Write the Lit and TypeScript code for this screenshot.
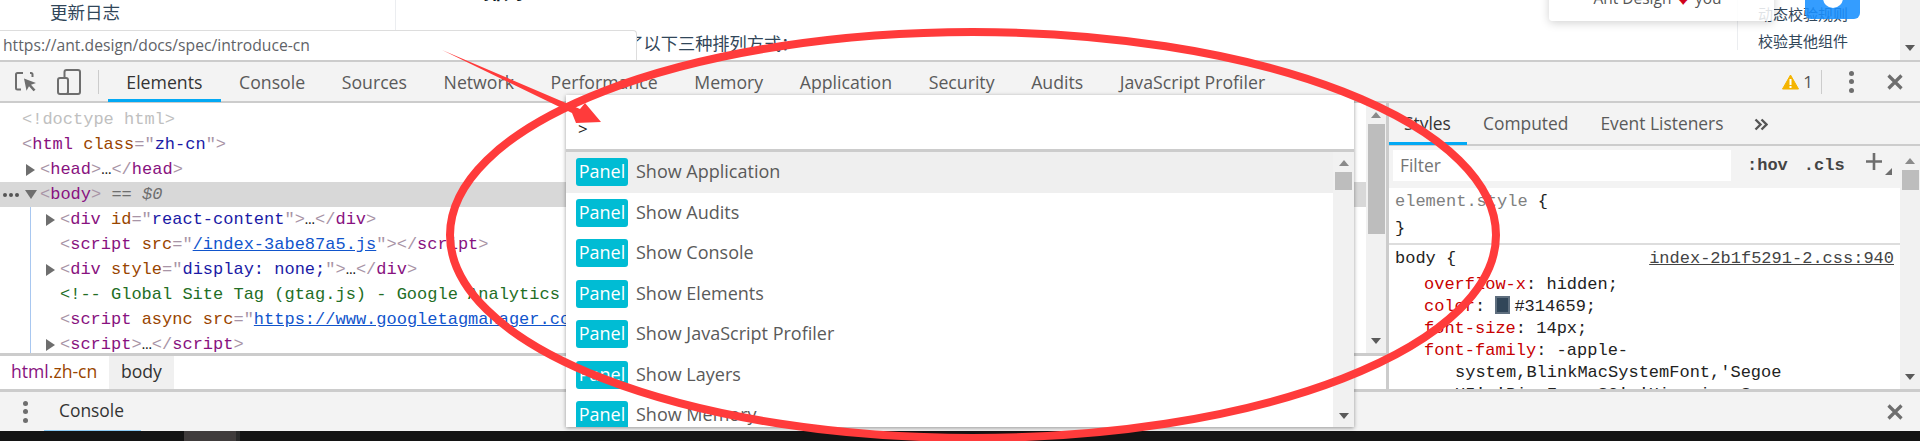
import { LitElement, html, css } from "lit";
import { customElement } from "lit/decorators.js";

const TABS = ["Elements","Console","Sources","Network","Performance","Memory","Application","Security","Audits","JavaScript Profiler"];
const ITEMS = ["Show Application","Show Audits","Show Console","Show Elements","Show JavaScript Profiler","Show Layers","Show Memory"];

@customElement("app-root")
export class AppRoot extends LitElement {
  static styles = css`
    :host { display: block; position: relative; width: 1920px; height: 441px; overflow: hidden; background: #fff;
      font-family: "Open Sans", "Noto Sans CJK SC", sans-serif; color: #333; }
    * { box-sizing: border-box; }
    .cjk { font-family: "Noto Sans CJK SC", sans-serif; color: #314659; }

    /* page behind devtools */
    .page { height: 60px; display: flex; overflow: hidden; }
    .side { width: 396px; border-right: 1px solid #ebedf0; padding: 0 0 0 50px; font-size: 17.5px; line-height: 24px; }
    .content { flex: 1; position: relative; min-width: 0; overflow: hidden; }
    .head { margin: -24px 0 0 87px; font-size: 20px; line-height: 30px; font-weight: 700; color: #0d1a26; height: 24px; }
    .para { margin: 30px 0 0 196px; font-size: 17.2px; line-height: 26px; white-space: nowrap; }
    .rnav { width: 163px; height: 50px; border-left: 1px solid #ebedf0; padding-left: 20px; font-size: 15px; line-height: 27px; white-space: nowrap; }
    .pscroll { width: 20px; background: #f1f1f1; display: flex; flex-direction: column; justify-content: flex-end; align-items: center; padding-bottom: 9px; }

    .fab { position: absolute; left: 1805px; top: -20px; width: 55px; height: 39px; background: rgba(24,144,255,.88); border-radius: 6px; }
    .fab i { position: absolute; left: 18px; top: 8px; width: 20px; height: 20px; border-radius: 50%; background: #fff; }
    .pop { position: absolute; left: 1549px; top: -20px; width: 225px; height: 41px; background: rgba(255,255,255,.85); border-radius: 4px;
      box-shadow: 0 2px 10px rgba(0,0,0,.18); text-align: center; font-size: 15.5px; color: #555; line-height: 22px; padding: 7px 8px 0 0; white-space: nowrap; }
    .pop b { color: #d0021b; font-weight: 400; }
    .url { position: absolute; left: 0; top: 30px; width: 637px; height: 30px; background: #fff; border: 1px solid #ddd; border-left: 0; border-bottom: 0;
      border-top-right-radius: 4px; font-size: 15.7px; line-height: 28px; padding-left: 3px; color: #5f6368; font-family: "Open Sans", sans-serif; }

    /* toolbar */
    .toolbar { height: 43px; background: #f3f3f3; border-top: 2px solid #ccc; border-bottom: 2px solid #ccc; display: flex; align-items: stretch; }
    .tools { width: 108px; display: flex; align-items: center; padding-left: 15px; }
    .tools svg { display: block; }
    .tools .dev { margin-left: 20px; }
    .vsep { width: 1px; height: 24px; background: #ccc; }
    .tools .vsep { margin-left: 17px; }
    .tabs { display: flex; flex: 1; }
    .tab { padding: 0 18.3px; font-size: 17.7px; line-height: 40px; color: #5a5a5a; white-space: nowrap; position: relative; }
    .tab.on { color: #333; }
    .tab.on::after { content: ""; position: absolute; left: 0; right: 0; bottom: -1px; height: 3px; background: #03a9f4; }
    .warn { display: flex; align-items: center; font-size: 17px; color: #555; }
    .warn .vsep { margin: 0 0 0 8px; }
    .warn .one { margin-left: 4px; }
    .dots { display: flex; flex-direction: column; gap: 3.5px; }
    .dots i { width: 5px; height: 5px; border-radius: 50%; background: #6e6e6e; display: block; }
    .warn .dots { margin-left: 27px; }
    .warn .x { margin: 0 17px 0 33px; }

    /* main */
    .main { height: 286px; display: flex; }
    .left { width: 1386px; display: flex; flex-direction: column; }
    .treewrap { height: 250px; display: flex; }
    .tree { width: 1366px; overflow: hidden; padding-top: 4px; position: relative; }
    .guide { position: absolute; left: 30px; top: 104px; bottom: 0; width: 1px; background: #a8c7f0; }
    .code { font-family: "Liberation Mono", monospace; font-size: 17px; white-space: nowrap; }
    .row { height: 25px; line-height: 25px; display: flex; align-items: center; }
    .row.sel { background: #d8d8d8; }
    .row.r0 { padding-left: 22px; }
    .row.r1 { padding-left: 26px; }
    .row.r2 { padding-left: 60px; }
    .row.r3 { padding-left: 46px; }
    .row.rb { padding-left: 3px; }
    .more { display: flex; gap: 2px; width: 22px; }
    .more i { width: 4px; height: 4px; border-radius: 50%; background: #555; display: block; }
    .tri { width: 0; height: 0; border-left: 9px solid #6e6e6e; border-top: 6px solid transparent; border-bottom: 6px solid transparent; margin-right: 5px; }
    .tdn { width: 0; height: 0; border-top: 9px solid #6e6e6e; border-left: 6px solid transparent; border-right: 6px solid transparent; margin-right: 3px; }
    .b { color: #a894a6; } .t { color: #881280; } .a { color: #994500; } .v { color: #1a1aa6; } .c { color: #236e25; }
    .l { color: #1155cc; text-decoration: underline; } .d { color: #c0c0c0; } .k { color: #222; } .g { color: #6e6e6e; }
    .vscroll { width: 20px; background: #f1f1f1; display: flex; flex-direction: column; align-items: center; position: relative; flex: none; }
    .up { width: 0; height: 0; border-bottom: 6px solid #8a8a8a; border-left: 5px solid transparent; border-right: 5px solid transparent; }
    .dn { width: 0; height: 0; border-top: 6px solid #5a5a5a; border-left: 5px solid transparent; border-right: 5px solid transparent; }
    .vscroll .up { margin-top: 9px; }
    .vscroll .th { width: 17px; background: #bdbdbd; margin-top: 6px; }
    .vscroll .dn { margin-top: auto; margin-bottom: 9px; }
    .tree-scroll .th { height: 110px; }
    .crumbs { height: 36px; border-top: 3px solid #ccc; display: flex; font-size: 17.6px; line-height: 31px; }
    .crumbs span { padding: 0 12px; white-space: nowrap; }
    .crumbs .first { width: 109px; color: #881280; padding: 0 0 0 11px; }
    .crumbs .first em { font-style: normal; color: #994500; }
    .crumbs .cur { background: #f0f0f0; color: #333; }

    .sidebar { flex: 1; border-left: 3px solid #ccc; display: flex; flex-direction: column; min-width: 0; }
    .stabs { height: 43px; background: #f3f3f3; border-bottom: 2px solid #ccc; display: flex; flex: none; }
    .stab { padding: 0 16px; font-size: 17.4px; line-height: 41px; color: #5a5a5a; position: relative; white-space: nowrap; }
    .stab:first-child { padding: 0 16px 0 15px; color: #333; width: 78px; }
    .stab:first-child::after { content: ""; position: absolute; left: 0; right: 0; bottom: -1px; height: 3px; background: #03a9f4; }
    .chev { margin: 15px 0 0 15px; display: block; }
    .sbody { flex: 1; display: flex; min-height: 0; }
    .scol { width: 511px; flex: none; display: flex; flex-direction: column; min-width: 0; overflow: hidden; }
    .filter { height: 42px; background: #f3f3f3; display: flex; align-items: center; padding: 0 0 3px 4px; flex: none; }
    .finput { width: 338px; height: 31px; background: #fff; padding-left: 7px; font-size: 17.4px; line-height: 30px; color: #757575; }
    .hov { font-family: "Liberation Mono", monospace; font-weight: 700; font-size: 17px; color: #444; margin-left: 16px; }
    .hov + .hov { margin-left: 16px; }
    .plus { margin-left: 20px; position: relative; width: 30px; height: 30px; }
    .plus svg { display: block; }
    .pane { padding: 2px 0 0 6px; line-height: 22px; }
    .pane.one { height: 57px; border-bottom: 2px solid #ddd; flex: none; padding-top: 3px; }
    .pane.one .close { margin-top: 5px; }
    .pane.one .g { color: #808080; }
    .rule { display: flex; justify-content: space-between; padding-right: 6px; margin: 1px 0 4px; }
    .rule u { color: #444; }
    .decl { padding-left: 29px; color: #222; }
    .decl .p { color: #c80000; }
    .decl2 { padding-left: 60px; color: #222; }
    .swatch { display: inline-block; width: 15px; height: 18px; background: #314659; border: 2px solid #5f6f7f; vertical-align: -3px; margin: 0 4px 0 0; }
    .side-scroll .th { height: 20px; }
    .side-scroll .up { margin-top: 12px; }

    .dborder { height: 3px; background: #ccc; }
    .drawer { height: 39px; background: #f3f3f3; display: flex; align-items: center; }
    .drawer .dots { margin-left: 23px; }
    .dtab { margin-left: 16px; width: 97px; height: 39px; padding-left: 15px; font-size: 17.4px; line-height: 37px; color: #333; border-bottom: 1px solid #8ccbf5; }
    .drawer .x { margin-left: auto; margin-right: 17px; }
    .dark { height: 10px; background: #141414; display: flex; position: relative; overflow: hidden; }
    .dark .win { margin-left: 184px; width: 56px; background: #403c3c; border-right: 4px solid #2a2a2a; }
    .dark .clock { margin-left: auto; margin-right: 94px; color: #fff; font-size: 14px; line-height: 20px; padding-top: 8px; height: 28px; }

    /* command palette */
    .palette { position: absolute; left: 566px; top: 95px; width: 788px; height: 332px; background: #fff; box-shadow: 0 1px 4px rgba(0,0,0,.4); display: flex; flex-direction: column; overflow: hidden; }
    .pinput { height: 54px; padding: 23px 0 0 12px; font-size: 17px; line-height: 22px; color: #222; flex: none; }
    .pline { height: 3px; background: #ccc; flex: none; }
    .plist { flex: 1; display: flex; min-height: 0; }
    .items { flex: 1; min-width: 0; overflow: hidden; }
    .item { height: 40.5px; display: flex; align-items: center; padding-left: 10px; font-size: 18px; color: #5a5a5a; }
    .item span:last-child { margin-top: -2px; }
    .tag { width: 52px; height: 28px; flex: none; border-radius: 3px; background: #00bcd4; color: #fff; text-align: center; line-height: 27px; margin-right: 8px; }
    .pal-scroll { width: 21px; }
    .pal-scroll .up { margin-top: 8px; }
    .pal-scroll .th { height: 18px; }
    .pal-scroll .dn { margin-bottom: 8px; }
    .item.on { background: #efefef; }

    .ink { position: absolute; left: 0; top: 0; width: 1920px; height: 441px; pointer-events: none; }
  `;

  private x() {
    return html`<svg class="x" width="16" height="16" viewBox="0 0 16 16"><path d="M1.5 1.5 14.5 14.5M14.5 1.5 1.5 14.5" stroke="#6e6e6e" stroke-width="3.2" fill="none"/></svg>`;
  }
  private dots() {
    return html`<div class="dots"><i></i><i></i><i></i></div>`;
  }

  render() {
    return html`
      <div class="page">
        <div class="side cjk">更新日志</div>
        <div class="content cjk">
          <div class="head">排列</div>
          <div class="para">提供了以下三种排列方式：</div>
        </div>
        <div class="rnav cjk"><div>动态校验规则</div><div>校验其他组件</div></div>
        <div class="pscroll"><div class="dn"></div></div>
      </div>
      <div class="fab"><i></i></div>
      <div class="pop">Ant Design <b>♥</b> you</div>
      <div class="url">https://ant.design/docs/spec/introduce-cn</div>

      <div class="toolbar">
        <div class="tools">
          <svg width="22" height="20" viewBox="0 0 22 20" fill="none"><path d="M8 1H2.500A1.500 1.500 0 0 0 1 2.500V16a1.500 1.500 0 0 0 1.500 1.500H6M15 1h1a1.500 1.500 0 0 1 1.500 1.500V5" stroke="#6e6e6e" stroke-width="2"/><path d="M9 6.500 21 11l-5 1.800 4.500 5-2 1.500-4.500-5-2.500 4.500z" fill="#6e6e6e"/></svg>
          <svg class="dev" width="24" height="26" viewBox="0 0 24 26" fill="none"><rect x="7.500" y="1" width="15.500" height="24" rx="2" stroke="#6e6e6e" stroke-width="2"/><rect x="1" y="9" width="10" height="16" rx="2" fill="#f3f3f3" stroke="#6e6e6e" stroke-width="2"/></svg>
          <div class="vsep"></div>
        </div>
        <div class="tabs">
          ${TABS.map((t, i) => html`<div class="tab ${i === 0 ? "on" : ""}">${t}</div>`)}
        </div>
        <div class="warn">
          <svg width="17" height="16" viewBox="0 0 17 16"><path d="M8.500 1 16.500 15H.5z" fill="#f4b400" stroke="#f4b400" stroke-linejoin="round"/><path d="M7.500 5h2v6h-2zM7.500 12h2v2h-2z" fill="#fff"/></svg>
          <span class="one">1</span>
          <div class="vsep"></div>
          ${this.dots()}
          ${this.x()}
        </div>
      </div>

      <div class="main">
        <div class="left">
          <div class="treewrap">
            <div class="tree code">
              <div class="guide"></div>
              <div class="row r0"><span class="d">&lt;!doctype html&gt;</span></div>
              <div class="row r0"><span><span class="b">&lt;</span><span class="t">html</span> <span class="a">class</span><span class="b">=</span><span class="b">"</span><span class="v">zh-cn</span><span class="b">"&gt;</span></span></div>
              <div class="row r1"><i class="tri"></i><span><span class="b">&lt;</span><span class="t">head</span><span class="b">&gt;</span><span class="k">…</span><span class="b">&lt;/</span><span class="t">head</span><span class="b">&gt;</span></span></div>
              <div class="row rb sel"><span class="more"><i></i><i></i><i></i></span><i class="tdn"></i><span><span class="b">&lt;</span><span class="t">body</span><span class="b">&gt;</span> <span class="g">== <em>$0</em></span></span></div>
              <div class="row r3"><i class="tri"></i><span><span class="b">&lt;</span><span class="t">div</span> <span class="a">id</span><span class="b">="</span><span class="v">react-content</span><span class="b">"&gt;</span><span class="k">…</span><span class="b">&lt;/</span><span class="t">div</span><span class="b">&gt;</span></span></div>
              <div class="row r2"><span><span class="b">&lt;</span><span class="t">script</span> <span class="a">src</span><span class="b">="</span><span class="l">/index-3abe87a5.js</span><span class="b">"&gt;&lt;/</span><span class="t">script</span><span class="b">&gt;</span></span></div>
              <div class="row r3"><i class="tri"></i><span><span class="b">&lt;</span><span class="t">div</span> <span class="a">style</span><span class="b">="</span><span class="v">display: none;</span><span class="b">"&gt;</span><span class="k">…</span><span class="b">&lt;/</span><span class="t">div</span><span class="b">&gt;</span></span></div>
              <div class="row r2"><span class="c">&lt;!-- Global Site Tag (gtag.js) - Google Analytics --&gt;</span></div>
              <div class="row r2"><span><span class="b">&lt;</span><span class="t">script</span> <span class="a">async</span> <span class="a">src</span><span class="b">="</span><span class="l">https://www.googletagmanager.com/gtag/js</span><span class="b">"&gt;&lt;/</span><span class="t">script</span><span class="b">&gt;</span></span></div>
              <div class="row r3"><i class="tri"></i><span><span class="b">&lt;</span><span class="t">script</span><span class="b">&gt;</span><span class="k">…</span><span class="b">&lt;/</span><span class="t">script</span><span class="b">&gt;</span></span></div>
            </div>
            <div class="vscroll tree-scroll"><div class="up"></div><div class="th"></div><div class="dn"></div></div>
          </div>
          <div class="crumbs"><span class="first">html<em>.zh-cn</em></span><span class="cur">body</span></div>
        </div>
        <div class="sidebar">
          <div class="stabs">
            <div class="stab">Styles</div><div class="stab">Computed</div><div class="stab">Event Listeners</div>
            <svg class="chev" width="14" height="13" viewBox="0 0 14 13" fill="none"><path d="M1.500 1.500 6.500 6.500 1.500 11.500M7.500 1.500 12.500 6.500 7.500 11.500" stroke="#555" stroke-width="2.400"/></svg>
          </div>
          <div class="sbody">
            <div class="scol">
              <div class="filter">
                <div class="finput">Filter</div>
                <span class="hov">:hov</span><span class="hov">.cls</span>
                <div class="plus"><svg width="30" height="30" viewBox="0 0 30 30"><path d="M9 2v17M1 10.500h16" stroke="#6e6e6e" stroke-width="2.600" fill="none"/><path d="M27 17v7h-7z" fill="#6e6e6e"/></svg></div>
              </div>
              <div class="pane one code"><div><span class="g">element.style</span> <span class="k">{</span></div><div class="k close">}</div></div>
              <div class="pane code">
                <div class="rule"><span class="k">body {</span><u>index-2b1f5291-2.css:940</u></div>
                <div class="decl"><span class="p">overflow-x</span>: hidden;</div>
                <div class="decl"><span class="p">color</span>: <i class="swatch"></i>#314659;</div>
                <div class="decl"><span class="p">font-size</span>: 14px;</div>
                <div class="decl"><span class="p">font-family</span>: -apple-</div>
                <div class="decl2">system,BlinkMacSystemFont,'Segoe</div>
                <div class="decl2">UI','PingFang SC','Hiragino Sans</div>
              </div>
            </div>
            <div class="vscroll side-scroll"><div class="up"></div><div class="th"></div><div class="dn"></div></div>
          </div>
        </div>
      </div>

      <div class="dborder"></div>
      <div class="drawer">
        ${this.dots()}
        <div class="dtab">Console</div>
        ${this.x()}
      </div>
      <div class="dark"><div class="win"></div><div class="clock">15:55</div></div>

      <div class="palette">
        <div class="pinput">&gt;</div>
        <div class="pline"></div>
        <div class="plist">
          <div class="items">
            ${ITEMS.map((t, i) => html`<div class="item ${i === 0 ? "on" : ""}"><span class="tag">Panel</span><span>${t}</span></div>`)}
          </div>
          <div class="vscroll pal-scroll"><div class="up"></div><div class="th"></div><div class="dn"></div></div>
        </div>
      </div>

      <svg class="ink" viewBox="0 0 1920 441">
        <ellipse cx="973" cy="235" rx="523" ry="203" fill="none" stroke="#ff3b3b" stroke-width="8"/>
        <path d="M442 50 580 109 585 103 601 122 576 123 572 113z" fill="#ff3b3b"/>
      </svg>
    `;
  }
}
